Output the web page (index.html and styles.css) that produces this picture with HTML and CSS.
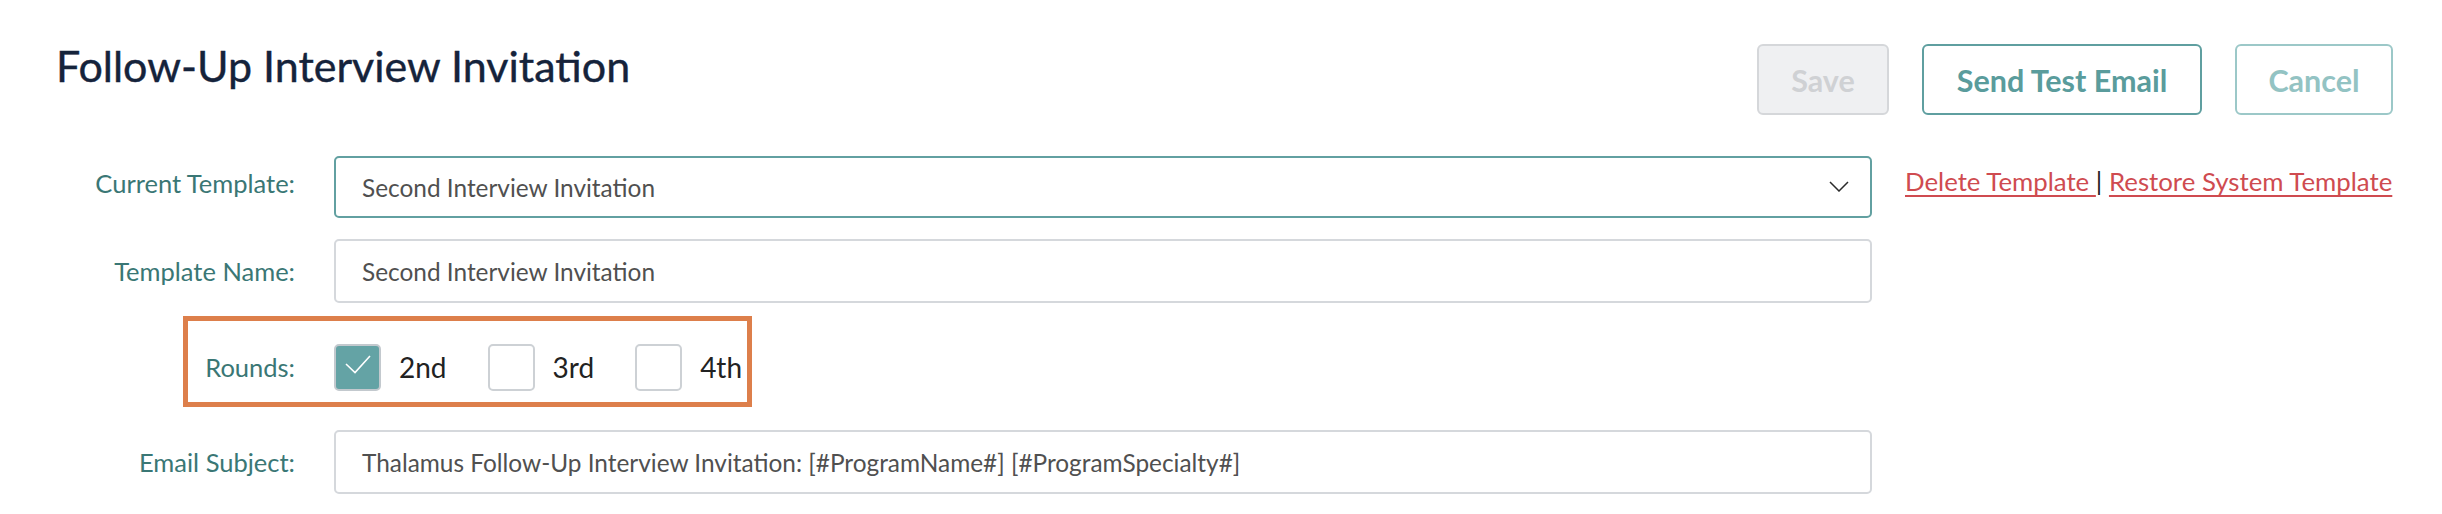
FILE: index.html
```html
<!DOCTYPE html>
<html lang="en">
<head>
<meta charset="utf-8">
<title>Follow-Up Interview Invitation</title>
<link rel="stylesheet" href="styles.css">
</head>
<body>
<div class="page">
  <header class="top">
    <h1 class="title">Follow-Up Interview Invitation</h1>
    <div class="actions">
      <button class="btn btn-save" type="button">Save</button>
      <button class="btn btn-test" type="button">Send Test Email</button>
      <button class="btn btn-cancel" type="button">Cancel</button>
    </div>
  </header>

  <div class="form">
    <div class="row row-select">
      <div class="lbl">Current Template:</div>
      <div class="field select">
        <span>Second Interview Invitation</span>
        <svg class="chev" width="20" height="11" viewBox="0 0 20 11"><path d="M1 1 L10 10 L19 1" fill="none" stroke="#2b2b2b" stroke-width="1.5"/></svg>
      </div>
      <div class="links"><a class="link" href="#">Delete Template </a><span class="sep">|</span> <a class="link" href="#">Restore System Template</a></div>
    </div>

    <div class="row row-name">
      <div class="lbl">Template Name:</div>
      <div class="field input">Second Interview Invitation</div>
    </div>

    <div class="rounds">
      <div class="rounds-lbl">Rounds:</div>
      <div class="opts">
        <div class="opt">
          <span class="cb cb-on"><svg width="43" height="43" viewBox="0 0 43 43"><path d="M10 18 L19 26.5 L34 10" fill="none" stroke="#ffffff" stroke-width="1.6"/></svg></span>
          <span class="opt-lbl">2nd</span>
        </div>
        <div class="opt">
          <span class="cb"></span>
          <span class="opt-lbl">3rd</span>
        </div>
        <div class="opt">
          <span class="cb"></span>
          <span class="opt-lbl">4th</span>
        </div>
      </div>
    </div>

    <div class="row row-subject">
      <div class="lbl">Email Subject:</div>
      <div class="field input">Thalamus Follow-Up Interview Invitation: [#ProgramName#] [#ProgramSpecialty#]</div>
    </div>
  </div>
</div>
</body>
</html>
```

FILE: styles.css
```css
* { box-sizing: border-box; }

html, body {
  margin: 0;
  padding: 0;
  background: #ffffff;
}

body {
  font-family: Lato, "Open Sans", "Liberation Sans", sans-serif;
  color: #222;
}

.page {
  width: 2442px;
}

.top {
  display: flex;
  justify-content: space-between;
  align-items: flex-start;
  padding: 41px 49px 0 56px;
}

.title {
  margin: 0;
  font-size: 43px;
  line-height: 50px;
  font-weight: 400;
  color: #15233b;
  -webkit-text-stroke: 0.4px #15233b;
}

.actions {
  display: flex;
  gap: 33px;
  margin-top: 3px;
}

.btn {
  height: 71px;
  border-radius: 6px;
  border: 2px solid;
  font-family: Lato, "Open Sans", "Liberation Sans", sans-serif;
  font-size: 30.5px;
  font-weight: 700;
  padding: 0;
  background: #fff;
}

.btn-save {
  width: 132px;
  background: #eff0f2;
  border-color: #d5d7da;
  color: #cfd1d4;
}

.btn-test {
  width: 280px;
  border-color: #5f9fa0;
  color: #5a9c9c;
}

.btn-cancel {
  width: 158px;
  border-color: #9cc8c8;
  color: #93c3c3;
}

.form {
  margin-top: 41px;
  display: flex;
  flex-direction: column;
}

.row {
  display: flex;
  align-items: center;
}

.row-select { margin-bottom: 21px; align-items: flex-start; }
.row-name { margin-bottom: 13px; }
.rounds { margin-bottom: 23px; }

.lbl {
  width: 334px;
  padding-right: 39px;
  text-align: right;
  font-size: 25.5px;
  color: #3a7775;
}

.row-select .lbl {
  line-height: 62px;
  margin-top: -4px;
}

.field {
  width: 1538px;
  border-radius: 5px;
  border: 2px solid #d5d8dc;
  font-size: 24.4px;
  font-weight: 400;
  color: #505050;
  display: flex;
  align-items: center;
  padding-left: 26px;
}

.input { height: 64px; }

.select {
  height: 62px;
  border-color: #62a0a1;
  justify-content: space-between;
  padding-right: 21px;
}

.chev { display: block; margin-top: -2px; }

.links {
  margin-left: 33px;
  padding-top: 10px;
  font-size: 25.8px;
  line-height: 30px;
  color: #222;
  white-space: nowrap;
}

.link {
  color: #cf4b50;
  text-decoration: underline;
  text-decoration-thickness: 2px;
  text-underline-offset: 4px;
}

.sep { color: #222; }

.rounds {
  margin-left: 183px;
  width: 569px;
  height: 91px;
  border: 5px solid #dd7f4b;
  display: flex;
  align-items: center;
  padding: 11px 0 0 0;
}

.rounds-lbl {
  width: 146px;
  padding-right: 39px;
  text-align: right;
  font-size: 25.5px;
  color: #3a7775;
}

.opts {
  display: flex;
  align-items: center;
  gap: 41px;
}

.opt {
  display: flex;
  align-items: center;
  gap: 18px;
}

.cb {
  width: 47px;
  height: 47px;
  border: 2px solid #cdd1d5;
  border-radius: 5px;
  background: #fff;
  display: block;
}

.cb svg { display: block; }

.cb-on {
  background: #64a3a5;
  border-color: #c3c9ce;
}

.opt-lbl {
  font-size: 28px;
  color: #222;
}
```
